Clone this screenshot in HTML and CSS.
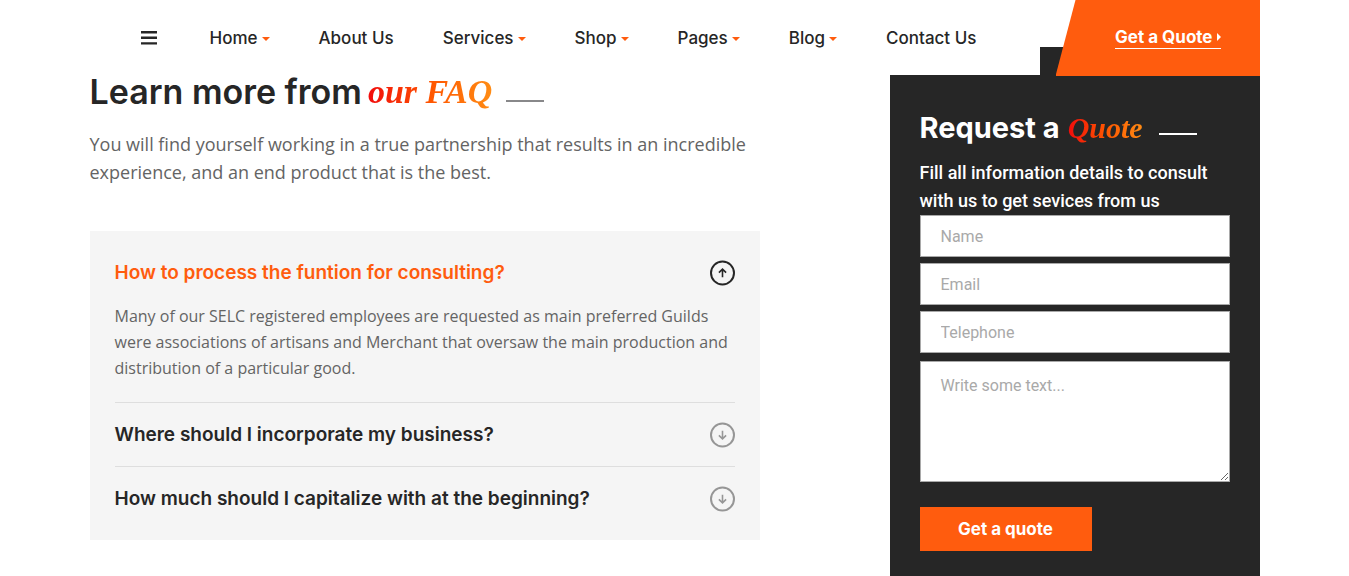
FILE: index.html
```html
<!DOCTYPE html>
<html lang="en">
<head>
<meta charset="utf-8">
<meta name="viewport" content="width=device-width, initial-scale=1">
<title>FAQ</title>
<link rel="stylesheet" href="styles.css">
</head>
<body>
<header class="site-header">
  <div class="container header-row">
    <nav class="nav" aria-label="Main">
      <button class="burger" type="button" aria-label="Open menu">
        <svg width="16" height="14" viewBox="0 0 16 14" aria-hidden="true"><path d="M0 0h16v2.4H0zM0 5.6h16V8H0zM0 11.2h16v2.4H0z" fill="currentColor"/></svg>
      </button>
      <ul class="menu">
        <li><a href="#">Home <span class="caret"></span></a></li>
        <li><a href="#">About Us</a></li>
        <li><a href="#">Services <span class="caret"></span></a></li>
        <li><a href="#">Shop <span class="caret"></span></a></li>
        <li><a href="#">Pages <span class="caret"></span></a></li>
        <li><a href="#">Blog <span class="caret"></span></a></li>
        <li><a href="#">Contact Us</a></li>
      </ul>
    </nav>
    <div class="cta">
      <a class="cta-link" href="#">Get a Quote<span class="cta-arrow"></span></a>
    </div>
  </div>
</header>

<main class="container content">
  <section class="faq">
    <h2 class="title">Learn more from <em class="accent">our FAQ</em></h2>
    <p class="lead">You will find yourself working in a true partnership that results in an incredible experience, and an end product that is the best.</p>
    <div class="accordion">
      <div class="item item-open">
        <h3 class="item-heading">
          <button class="item-toggle" type="button" aria-expanded="true">How to process the funtion for consulting?
            <svg class="item-icon" viewBox="0 0 26 26" aria-hidden="true"><circle cx="13.5" cy="13" r="11.5"/><path d="M13.5 17.2V9.4M9.9 12.6 13.5 9.2l3.6 3.4"/></svg>
          </button>
        </h3>
        <p class="item-body">Many of our SELC registered employees are requested as main preferred Guilds were associations of artisans and Merchant that oversaw the main production and distribution of a particular good.</p>
      </div>
      <div class="item">
        <h3 class="item-heading">
          <button class="item-toggle" type="button" aria-expanded="false">Where should I incorporate my business?
            <svg class="item-icon" viewBox="0 0 26 26" aria-hidden="true"><circle cx="13.5" cy="13" r="11.5"/><path d="M13.5 8.8v7.8M9.9 13.4l3.6 3.4 3.6-3.4"/></svg>
          </button>
        </h3>
      </div>
      <div class="item">
        <h3 class="item-heading">
          <button class="item-toggle" type="button" aria-expanded="false">How much should I capitalize with at the beginning?
            <svg class="item-icon" viewBox="0 0 26 26" aria-hidden="true"><circle cx="13.5" cy="13" r="11.5"/><path d="M13.5 8.8v7.8M9.9 13.4l3.6 3.4 3.6-3.4"/></svg>
          </button>
        </h3>
      </div>
    </div>
  </section>

  <aside class="quote">
    <h2 class="title title-small">Request a <em class="accent">Quote</em></h2>
    <p class="quote-lead">Fill all information details to consult with us to get sevices from us</p>
    <form class="form">
      <input class="field" type="text" placeholder="Name" aria-label="Name">
      <input class="field" type="email" placeholder="Email" aria-label="Email">
      <input class="field" type="tel" placeholder="Telephone" aria-label="Telephone">
      <textarea class="field field-area" placeholder="Write some text..." aria-label="Message"></textarea>
      <button class="submit" type="submit">Get a quote</button>
    </form>
  </aside>
</main>
</body>
</html>
```
FILE: styles.css
```css
:root {
  --ink: #262626;
  --orange: #ff5c0e;
  --grey: #646464;
  --heading-font: Inter, "Open Sans", sans-serif;
  --body-font: Roboto, "Noto Sans", sans-serif;
  --text-font: "Open Sans", "Noto Sans", sans-serif;
}

* { box-sizing: border-box; }

body {
  margin: 0;
  background: #fff;
  color: var(--ink);
  font-family: var(--body-font);
}

h2, h3, p, ul { margin: 0; padding: 0; }

button { font: inherit; color: inherit; background: none; border: 0; padding: 0; cursor: pointer; }

.container {
  width: 100%;
  max-width: 1170px;
  margin: 0 auto;
}

/* Header, laid over the top of the content */
.site-header {
  position: fixed;
  top: 0;
  left: 0;
  right: 0;
  z-index: 10;
}

.header-row {
  display: flex;
  align-items: flex-start;
  gap: 16px;
}

.nav {
  flex: 1;
  display: flex;
  align-items: center;
  gap: 53px;
  height: 75px;
  padding: 0 63px 0 51px;
  background: #fff;
}

.burger { display: flex; }

.menu {
  flex: 1;
  display: flex;
  justify-content: space-between;
  list-style: none;
  font: 500 17px/24px var(--heading-font);
}

.menu a {
  display: flex;
  align-items: center;
  gap: 4px;
  color: var(--ink);
  text-decoration: none;
}

.caret {
  margin-top: 2px;
  border: 4px solid transparent;
  border-top-color: var(--orange);
  border-bottom: 0;
}

.cta {
  display: flex;
  align-items: center;
  justify-content: flex-end;
  width: 204px;
  height: 76px;
  padding: 0 39px 2px 0;
  background: var(--orange);
  clip-path: polygon(20px 0, calc(100% + 1px) 0, calc(100% + 1px) 100%, 0 100%);
}

.cta-link {
  display: flex;
  align-items: center;
  gap: 4px;
  border-bottom: 1px solid #fff;
  color: #fff;
  font: 700 17px/22px var(--heading-font);
  text-decoration: none;
}

.cta-arrow {
  border: 4px solid transparent;
  border-left-color: #fff;
  border-right: 0;
}

/* Content */
.content {
  display: grid;
  grid-template-columns: minmax(0, 670px) 370px;
  justify-content: space-between;
  padding-top: 47px;
}

.title {
  display: flex;
  align-items: center;
  gap: 6px;
  font: 600 34px/40px var(--heading-font);
  white-space: nowrap;
}

.title::after {
  content: "";
  width: 38px;
  height: 2px;
  margin: 18px 0 0 8px;
  background: #88888a;
}

.title-small {
  gap: 8px;
  font-size: 29px;
  font-weight: 700;
  line-height: 36px;
}

.title-small::after { margin-top: 12px; background: #fff; }

.accent {
  background: linear-gradient(90deg, #f10c0c, #ff5500 50%, #ff8c14);
  background-clip: text;
  -webkit-background-clip: text;
  color: transparent;
  font-family: "Liberation Serif", serif;
  font-weight: 700;
}

.title-small .accent { font-size: 30px; }

.faq { padding-top: 25px; }

.lead {
  margin: 18px 0 45px;
  color: var(--grey);
  font-family: var(--text-font);
  font-size: 18px;
  line-height: 28px;
}

.accordion {
  padding: 10px 25px;
  background: #f5f5f5;
}

.item { padding: 19px 0 18px; }

.item + .item { border-top: 1px solid #dedede; }

.item-heading { font: 600 19px/26px var(--heading-font); }

.item-toggle {
  display: flex;
  align-items: center;
  justify-content: space-between;
  width: 100%;
  text-align: left;
}

.item-open .item-toggle { color: var(--orange); }

.item-icon {
  width: 26px;
  height: 26px;
  fill: none;
  stroke: #969696;
  stroke-width: 2;
}

.item-icon path { stroke-width: 1.6; }

.item-open .item-icon { stroke: var(--ink); }

.item-body {
  margin: 17px 0 3px;
  color: var(--grey);
  font-family: var(--text-font);
  font-size: 16px;
  line-height: 26px;
}

/* Quote panel */
.quote {
  min-height: calc(100vh - 47px);
  padding: 63px 30px 25px;
  background: var(--ink);
  color: #fff;
}

.quote-lead {
  margin-top: 13px;
  font-size: 18px;
  font-weight: 500;
  line-height: 28px;
}

.form {
  display: flex;
  flex-direction: column;
  align-items: flex-start;
  gap: 6px;
}

.field {
  width: 100%;
  height: 42px;
  padding: 0 20px;
  border: 1px solid #a9a9a9;
  border-radius: 0;
  background: #fff;
  color: var(--ink);
  font: 16px/24px var(--body-font);
}

.field::placeholder { color: #a9a9a9; opacity: 1; }

.field-area {
  height: 121px;
  margin-top: 2px;
  padding: 12px 20px;
  resize: both;
}

.submit {
  width: 172px;
  height: 44px;
  margin-top: 19px;
  background: var(--orange);
  color: #fff;
  font: 700 17px/24px var(--heading-font);
}
```
